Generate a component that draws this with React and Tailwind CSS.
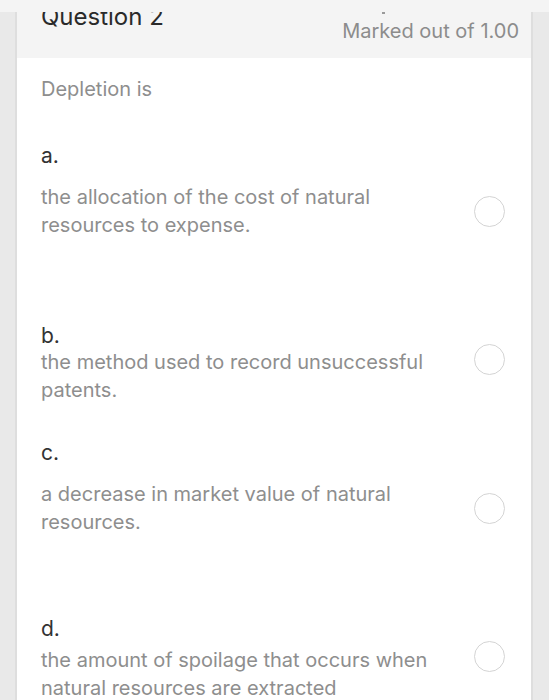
import React from 'react';

const font = { fontFamily: 'Inter, "Liberation Sans", sans-serif' };

const Radio = ({ className = '' }) => (
  <div className={`w-[31px] h-[31px] shrink-0 rounded-full border-[1.5px] border-[#d4d4d4] bg-white ${className}`} />
);

export default function App() {
  return (
    <div className="w-[549px] h-[700px] overflow-hidden bg-[#e9e9e9] flex flex-col" style={font}>
      {/* top bar over the scrolled card */}
      <div className="h-[12px] shrink-0 bg-[#f4f4f4]" />

      <div className="flex flex-1">
        <div className="w-[17px] shrink-0 border-r-2 border-[#dedede]" />

        <div className="w-[514px] shrink-0 bg-white">
          {/* header */}
          <div className="h-[46px] bg-[#f4f4f4] overflow-hidden flex justify-between pl-6 pr-3">
            <div className="text-[24px] leading-[24px] text-[#2a2a2a] -mt-[7px]">Question 2</div>
            <div className="flex flex-col items-end">
              <div className="h-[3px] w-[3px] bg-[#9a9a9a] mr-[134px] -mt-[1px]" />
              <div className="text-[20px] leading-[28px] text-[#8c8c8c] mt-[3px]">Marked out of 1.00</div>
            </div>
          </div>

          <div className="pl-6 pr-[26px]">
            <div className="pt-[17px] text-[20px] leading-[28px] text-[#8e8e8e]">Depletion is</div>

            {/* a */}
            <div className="mt-[39px] text-[21px] leading-[28px] text-[#333]">a.</div>
            <div className="mt-[13px] flex items-center justify-between">
              <div className="w-[400px] text-[20px] leading-[28px] text-[#8e8e8e]">
                the allocation of the cost of natural resources to expense.
              </div>
              <Radio />
            </div>

            {/* b */}
            <div className="mt-[83px] flex items-center justify-between">
              <div className="w-[400px]">
                <div className="text-[21px] leading-[28px] text-[#333]">b.</div>
                <div className="-mt-[2px] text-[20px] leading-[28px] text-[#8e8e8e]">
                  the method used to record unsuccessful patents.
                </div>
              </div>
              <Radio className="mb-[7px]" />
            </div>

            {/* c */}
            <div className="mt-[35px] text-[21px] leading-[28px] text-[#333]">c.</div>
            <div className="mt-[13px] flex items-center justify-between">
              <div className="w-[400px] text-[20px] leading-[28px] text-[#8e8e8e]">
                a decrease in market value of natural resources.
              </div>
              <Radio />
            </div>

            {/* d */}
            <div className="mt-[79px] flex items-center justify-between">
              <div className="w-[400px]">
                <div className="text-[21px] leading-[28px] text-[#333]">d.</div>
                <div className="mt-[3px] text-[20px] leading-[28px] text-[#8e8e8e]">
                  the amount of spoilage that occurs when natural resources are extracted
                </div>
              </div>
              <Radio className="mb-[4px]" />
            </div>
          </div>
        </div>

        <div className="flex-1 border-l-2 border-[#dedede]" />
      </div>
    </div>
  );
}
